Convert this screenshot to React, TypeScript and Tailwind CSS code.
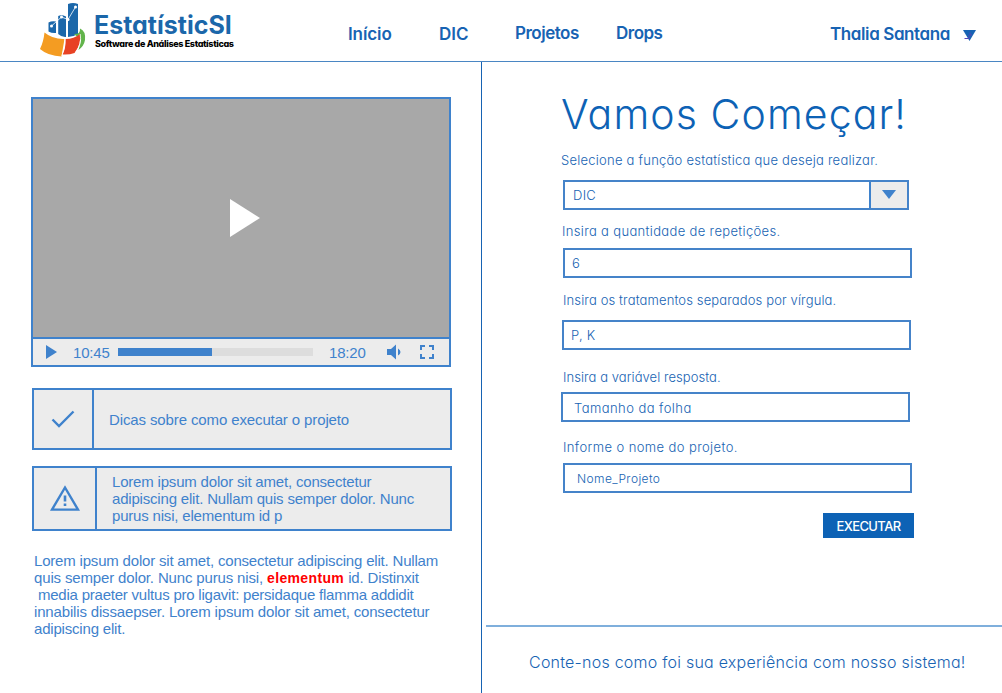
import React from "react";

function Logo() {
  return (
    <svg viewBox="0 0 48 56" className="h-[56px] w-[48px] shrink-0">
      <path d="M8.500 21.500Q12 19.500 16 20.500V32Q12 32.500 8.500 30.500Z" fill="#1b67aa" />
      <path d="M18.200 15Q21.500 13.500 26 15.500V36Q22 36.500 18.200 33Z" fill="#1b67aa" />
      <path d="M28 3Q33 1 38 3V33Q33 36 28 36Z" fill="#1b67aa" />
      <path d="M11.500 25L21.500 16L28 18.500L35.500 6" fill="none" stroke="#fff" strokeWidth="0.800" />
      <g fill="#fff">
        <circle cx="11.500" cy="25" r="1.500" />
        <circle cx="21.500" cy="16" r="1.500" />
        <circle cx="28" cy="18.500" r="1.500" />
        <circle cx="35.500" cy="6" r="1.500" />
      </g>
      <path d="M34 33Q40.500 33.500 40 27.500Q46 30 45 39Q44 45 38.500 49L41 39Z" fill="#62b44b" />
      <path d="M4.500 31.500Q13 38.500 24.500 38L21.500 55.500Q8 55 0 48Q3.500 41 4.500 31.500Z" fill="#f49c22" />
      <path d="M25.500 38Q34 38 40 33Q41.500 43 34.500 52Q29 54 22.500 53.500Q26 47 25.500 38Z" fill="#e84224" />
      <path d="M25 38Q25.500 47 21.800 55M40.200 33Q42 43 36 51" fill="none" stroke="#fff" strokeWidth="0.800" />
    </svg>
  );
}

function Field({ label, labelClass, boxClass, value, valueClass, select }: {
  label: string;
  labelClass: string;
  boxClass: string;
  value: string;
  valueClass: string;
  select?: boolean;
}) {
  return (
    <div className="flex flex-col items-start">
      <label className={`h-5 text-[13px] leading-5 font-light whitespace-nowrap text-[#1763b3] ${labelClass}`}>{label}</label>
      <div className={`flex h-[30px] border-2 border-[#4583c9] bg-white ${boxClass}`}>
        <span className={`flex-1 leading-[26px] font-light whitespace-nowrap text-[#1763b3] ${valueClass}`}>{value}</span>
        {select && (
          <span className="flex w-[38px] items-center justify-center border-l-2 border-[#3f82cc] bg-[#ececec]">
            <svg viewBox="0 0 14 9" className="mb-[2px] h-[9px] w-[14px]"><path d="M0 0H14L7 9Z" fill="#3f82cc" /></svg>
          </span>
        )}
      </div>
    </div>
  );
}

export default function App() {
  return (
    <div className="flex h-[693px] w-[1002px] flex-col overflow-hidden bg-white font-['Inter',sans-serif] [font-feature-settings:'cv11'_1]">
      <header className="flex h-[62px] shrink-0 border-b border-[#4a86c3] text-[17px] leading-6 font-semibold whitespace-nowrap text-[#1763b3]">
        <div className="flex w-[348px] pt-px pl-[40px]">
          <Logo />
          <div className="pt-[10px] pl-[6px]">
            <div className="h-[27px] text-[25px] leading-[29px] font-bold tracking-[0px] text-[#1b67aa]">EstatísticSI</div>
            <div className="pl-px text-[9px] leading-[11px] font-extrabold tracking-[-0.35px] text-black">Software de Análises Estatísticas</div>
          </div>
        </div>
        <a className="mt-[22px] w-[91px] tracking-[-0.1px]">Início</a>
        <a className="mt-[22px] w-[76px] tracking-[0px]">DIC</a>
        <a className="mt-[21px] w-[101px] tracking-[-0.5px]">Projetos</a>
        <a className="mt-[21px] w-[214px] tracking-[-0.5px]">Drops</a>
        <div className="mt-[22px] flex">
          <span className="w-[133px] tracking-[-0.4px]">Thalia Santana</span>
          <svg viewBox="0 0 13 11" className="mt-2 h-[11px] w-[13px]"><path d="M0 0H13L6.500 11Z" fill="#1763b3" /><path d="M1.500 8.500H6V5M7 2.500V5H9" stroke="#5546b8" fill="none" /></svg>
        </div>
      </header>

      <div className="flex min-h-0 flex-1">
        <section className="w-[482px] shrink-0 border-r border-[#1763b3] pt-[35px] pl-[31px] font-['Liberation_Sans',sans-serif] text-[15px] leading-[17px] tracking-[-0.19px] text-[#3f82cc]">
          <div className="h-[270px] w-[420px] border-2 border-[#3f82cc]">
            <div className="flex h-[240px] items-center justify-center border-b-2 border-[#3f82cc] bg-[#a8a8a8]">
              <svg viewBox="0 0 30 38" className="mb-px ml-[8px] h-[38px] w-[30px]"><path d="M0 0L30 19L0 38Z" fill="#fff" /></svg>
            </div>
            <div className="flex h-[26px] items-center bg-[#ececec] pl-[13px]">
              <svg viewBox="0 0 11 14" className="h-[14px] w-[11px]"><path d="M0 0L11 7L0 14Z" fill="#3f82cc" /></svg>
              <span className="ml-[16px] w-[45px] pt-px">10:45</span>
              <div className="h-2 w-[195px] bg-[#dddddd]"><div className="h-2 w-[94px] bg-[#3f82cc]" /></div>
              <span className="ml-[16px] w-[58px] pt-px">18:20</span>
              <svg viewBox="0 0 14 16" className="h-[16px] w-[14px]" fill="#3f82cc"><path d="M0 5H4L9 0.500V15.500L4 11H0ZM11 4.500Q13.500 6 13.500 8T11 11.500Z" /></svg>
              <svg viewBox="0 0 14 14" className="ml-[19px] h-[14px] w-[14px]" fill="none" stroke="#3f82cc" strokeWidth="2"><path d="M1 5V1H5M9 1H13V5M13 9V13H9M5 13H1V9" /></svg>
            </div>
          </div>

          <div className="mt-[21px] ml-px flex h-[62px] w-[420px] items-center border-2 border-[#3f82cc] bg-[#ececec]">
            <div className="flex h-full w-[60px] items-center justify-center border-r-2 border-[#3f82cc]">
              <svg viewBox="0 0 24 18" className="h-[18px] w-[24px]" fill="none" stroke="#3f82cc" strokeWidth="2.400"><path d="M1.500 9.500L8 16L22.500 1.500" /></svg>
            </div>
            <p className="pl-[15px] tracking-[-0.12px]">Dicas sobre como executar o projeto</p>
          </div>

          <div className="mt-4 ml-px flex h-[65px] w-[420px] items-center border-2 border-[#3f82cc] bg-[#ececec]">
            <div className="flex h-full w-[63px] items-center justify-center border-r-2 border-[#3f82cc]">
              <svg viewBox="0 0 30 26" className="mb-px h-[26px] w-[30px]" fill="none" stroke="#3f82cc"><path d="M2 24.600L15 2.500L28 24.600Z" strokeWidth="2.400" /><path d="M15 10.500V16.500M15 18.500V21" strokeWidth="2.600" /></svg>
            </div>
            <p className="pl-[15px] whitespace-nowrap">Lorem ipsum dolor sit amet, consectetur<br />adipiscing elit. Nullam quis semper dolor. Nunc<br />purus nisi, elementum id p</p>
          </div>

          <p className="mt-[21px] ml-[3px] whitespace-pre">Lorem ipsum dolor sit amet, consectetur adipiscing elit. Nullam<br /><span className="tracking-[-0.15px]">quis semper dolor. Nunc purus nisi, <b className="text-[14px] leading-none tracking-[0.35px] text-[#ff0000]">elementum</b> id. Distinxit</span><br /><span className="tracking-[-0.22px]">{" media praeter vultus pro ligavit: persidaque flamma addidit"}</span><br /><span className="tracking-[-0.16px]">innabilis dissaepser. Lorem ipsum dolor sit amet, consectetur</span><br />adipiscing elit.</p>
        </section>

        <section className="flex min-w-0 flex-1 flex-col">
          <div className="h-[563px] shrink-0 pt-[28px] pl-[79px]">
            <h1 className="h-[48px] text-[41px] leading-[48px] font-light tracking-[1.1px] whitespace-nowrap text-[#0d62b5]">Vamos Começar!</h1>
            <form className="pt-3">
              <Field label="Selecione a função estatística que deseja realizar." labelClass="tracking-[0.24px]" boxClass="mt-[10px] ml-[2px] w-[346px]" value="DIC" valueClass="pl-2 text-[13px] tracking-[0.3px]" select />
              <div className="h-[11px]" />
              <Field label="Insira a quantidade de repetições." labelClass="ml-px tracking-[0.34px]" boxClass="mt-[7px] ml-[2px] w-[349px]" value="6" valueClass="pl-[7px] text-[13px]" />
              <div className="h-[12px]" />
              <Field label="Insira os tratamentos separados por vírgula." labelClass="ml-[2px] tracking-[0.13px]" boxClass="mt-[10px] ml-px w-[349px]" value="P, K" valueClass="pl-[7px] text-[13px] tracking-[0.3px]" />
              <div className="h-[17px]" />
              <Field label="Insira a variável resposta." labelClass="ml-[2px] tracking-[0.06px]" boxClass="mt-[5px] w-[349px]" value="Tamanho da folha" valueClass="pt-px pl-[11px] text-[13px] tracking-[0.44px]" />
              <div className="h-[15px]" />
              <Field label="Informe o nome do projeto." labelClass="ml-[2px] tracking-[0.4px]" boxClass="mt-[6px] ml-[2px] w-[349px]" value="Nome_Projeto" valueClass="pt-px pl-[12px] text-[12px] tracking-[0.4px]" />
              <button type="button" className="mt-[20px] ml-[262px] block h-[25px] w-[91px] bg-[#0d62b5] pt-[2px] text-[13px] leading-[23px] font-medium tracking-[-0.6px] whitespace-nowrap text-white">EXECUTAR</button>
            </form>
          </div>
          <footer className="ml-[4px] flex-1 border-t-2 border-[#7fafdc] pt-[23px] pl-[43px] text-[16px] leading-6 font-light tracking-[0.23px] whitespace-nowrap text-[#1763b3]">Conte-nos como foi sua experiência com nosso sistema!</footer>
        </section>
      </div>
    </div>
  );
}
